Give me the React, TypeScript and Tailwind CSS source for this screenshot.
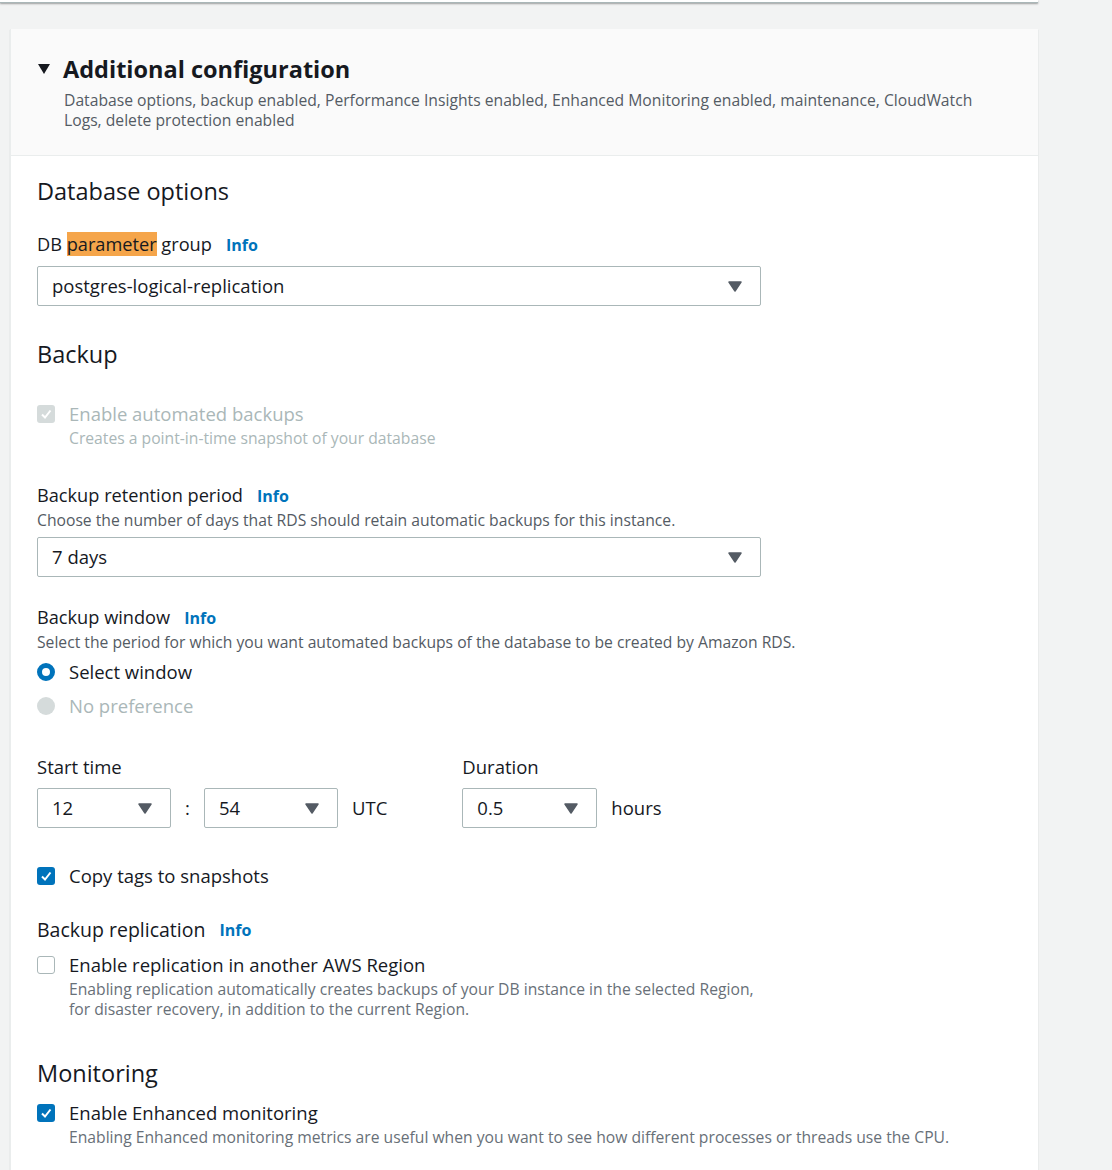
import { useState } from "react";

function Caret() {
  return (
    <svg width="14" height="11" viewBox="0 0 14 11" className="shrink-0">
      <path d="M1 1 L13 1 L7 10 Z" fill="#545b64" stroke="#545b64" strokeWidth="1.5" strokeLinejoin="round" />
    </svg>
  );
}

function Select({ value, className }: { value: string; className: string }) {
  return (
    <div
      className={`h-10 border border-[#aab7b8] rounded-[2px] bg-white flex items-center justify-between pl-[14px] pr-[18px] text-[18.5px] text-[#16191f] ${className}`}
    >
      <span>{value}</span>
      <Caret />
    </div>
  );
}

function Info() {
  return <span className="text-[16px] font-bold text-[#0073bb]">Info</span>;
}

function CheckBox({ checked, disabled }: { checked: boolean; disabled?: boolean }) {
  if (checked) {
    return (
      <div
        className={`w-[18px] h-[18px] rounded-[3px] flex items-center justify-center shrink-0 ${
          disabled ? "bg-[#d5dbdb]" : "bg-[#0073bb]"
        }`}
      >
        <svg width="12" height="12" viewBox="0 0 12 12">
          <path d="M2 6.5 L5 9.5 L10.5 2.5" fill="none" stroke="white" strokeWidth="2" />
        </svg>
      </div>
    );
  }
  return <div className="w-[18px] h-[18px] rounded-[3px] border border-[#aab7b8] bg-white shrink-0" />;
}

export default function App() {
  const [copyTags, setCopyTags] = useState(true);
  const [replication, setReplication] = useState(false);
  const [enhanced, setEnhanced] = useState(true);

  return (
    <div
      className="w-[1112px] h-[1170px] bg-[#f2f3f3] overflow-hidden text-[#16191f]"
      style={{ fontFamily: '"Open Sans", "Noto Sans", sans-serif' }}
    >
      <div className="w-[1038px] h-[3px] bg-white shadow-[0_1px_2px_rgba(0,0,0,0.35)] border-b border-[#aab7b8]" />

      <div className="ml-[10px] mt-[26px] w-[1028px] bg-white shadow-[0_1px_1px_rgba(0,28,36,0.2)] border-l border-[#eaeded]">
        <div className="bg-[#fafafa] pl-[27px] pr-6 pt-[24px] pb-[25px] border-b border-[#eaeded]">
          <div className="flex items-center gap-[13px]">
            <svg width="12" height="10" viewBox="0 0 12 10">
              <path d="M0 0 L12 0 L6 10 Z" fill="#16191f" />
            </svg>
            <h2 className="text-[23.5px] font-bold leading-[32px]">Additional configuration</h2>
          </div>
          <p className="ml-[26px] mt-[5px] text-[15.7px] leading-[20px] text-[#545b64] w-[930px]">
            Database options, backup enabled, Performance Insights enabled, Enhanced Monitoring enabled, maintenance, CloudWatch Logs, delete protection enabled
          </p>
        </div>

        <div className="pl-[26px] pt-[20px] pb-10">
          <h3 className="text-[23.5px] leading-[30px]">Database options</h3>

          <div className="mt-[27px] flex items-center gap-[14px] h-6">
            <span className="text-[18.2px]">
              DB <span className="bg-[#f5a54a]">parameter</span> group
            </span>
            <Info />
          </div>
          <Select value="postgres-logical-replication" className="mt-[9px] w-[724px]" />

          <h3 className="mt-[33px] text-[23.5px] leading-[30px]">Backup</h3>

          <div className="mt-[34px] flex gap-[14px]">
            <div className="mt-[2px]">
              <CheckBox checked disabled />
            </div>
            <div>
              <div className="text-[18.5px] leading-[22px] text-[#aab7b8]">Enable automated backups</div>
              <div className="mt-[3px] text-[15.7px] leading-[20px] text-[#aab7b8]">
                Creates a point-in-time snapshot of your database
              </div>
            </div>
          </div>

          <div className="mt-[36px] flex items-center gap-[14px] h-6">
            <span className="text-[18.2px]">Backup retention period</span>
            <Info />
          </div>
          <div className="mt-[2px] text-[15.7px] leading-[20px] text-[#545b64]">
            Choose the number of days that RDS should retain automatic backups for this instance.
          </div>
          <Select value="7 days" className="mt-[7px] w-[724px]" />

          <div className="mt-[29px] flex items-center gap-[14px] h-6">
            <span className="text-[18.2px]">Backup window</span>
            <Info />
          </div>
          <div className="mt-[2px] text-[15.7px] leading-[20px] text-[#545b64]">
            Select the period for which you want automated backups of the database to be created by Amazon RDS.
          </div>
          <div className="mt-[7px] flex items-center gap-[14px] h-[26px]">
            <div className="w-[18px] h-[18px] rounded-full border-[5px] border-[#0073bb] bg-white" />
            <span className="text-[18.5px]">Select window</span>
          </div>
          <div className="mt-[8px] flex items-center gap-[14px] h-[26px]">
            <div className="w-[18px] h-[18px] rounded-full bg-[#d5dbdb]" />
            <span className="text-[18.5px] text-[#aab7b8]">No preference</span>
          </div>

          <div className="mt-[36px] flex">
            <div>
              <div className="text-[18.5px] leading-[24px]">Start time</div>
              <div className="mt-[9px] flex items-center">
                <Select value="12" className="w-[134px]" />
                <span className="w-[33px] text-center text-[18.5px]">:</span>
                <Select value="54" className="w-[134px]" />
                <span className="ml-[14px] text-[18.5px]">UTC</span>
              </div>
            </div>
            <div className="ml-[75px]">
              <div className="text-[18.5px] leading-[24px]">Duration</div>
              <div className="mt-[9px] flex items-center">
                <Select value="0.5" className="w-[135px]" />
                <span className="ml-[14px] text-[18.5px]">hours</span>
              </div>
            </div>
          </div>

          <label className="mt-[36px] flex items-center gap-[14px] h-[24px] cursor-pointer" onClick={() => setCopyTags(!copyTags)}>
            <CheckBox checked={copyTags} />
            <span className="text-[18.5px]">Copy tags to snapshots</span>
          </label>

          <div className="mt-[30px] flex items-center gap-[14px] h-6">
            <span className="text-[19.5px]">Backup replication</span>
            <Info />
          </div>
          <div className="mt-[12px] flex gap-[14px] cursor-pointer" onClick={() => setReplication(!replication)}>
            <div className="mt-[2px]">
              <CheckBox checked={replication} />
            </div>
            <div>
              <div className="text-[18.5px] leading-[22px]">Enable replication in another AWS Region</div>
              <div className="mt-[3px] text-[15.7px] leading-[20px] text-[#687078] w-[695px]">
                Enabling replication automatically creates backups of your DB instance in the selected Region, for disaster recovery, in addition to the current Region.
              </div>
            </div>
          </div>

          <h3 className="mt-[39px] text-[23.5px] leading-[30px]">Monitoring</h3>
          <div className="mt-[14px] flex gap-[14px] cursor-pointer" onClick={() => setEnhanced(!enhanced)}>
            <div className="mt-[2px]">
              <CheckBox checked={enhanced} />
            </div>
            <div>
              <div className="text-[18.5px] leading-[22px]">Enable Enhanced monitoring</div>
              <div className="mt-[3px] text-[15.7px] leading-[20px] text-[#687078]">
                Enabling Enhanced monitoring metrics are useful when you want to see how different processes or threads use the CPU.
              </div>
            </div>
          </div>
        </div>
      </div>
    </div>
  );
}
